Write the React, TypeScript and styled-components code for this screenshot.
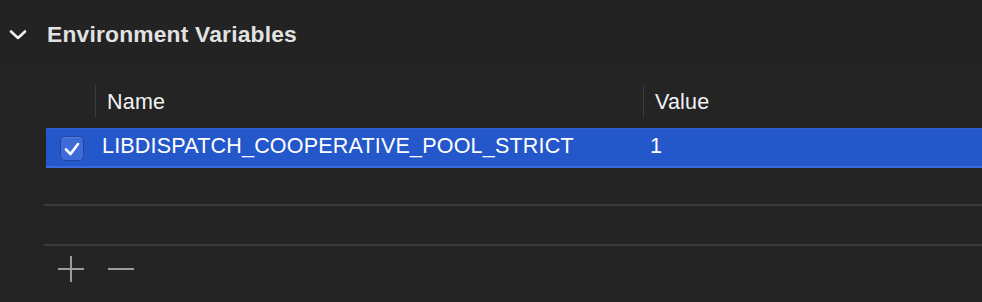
import React, { useState } from "react";
import styled, { createGlobalStyle } from "styled-components";

const GlobalStyle = createGlobalStyle`
  html, body {
    margin: 0;
    padding: 0;
    background: #242424;
  }
  body {
    font-family: "Liberation Sans", Arial, sans-serif;
    -webkit-font-smoothing: antialiased;
  }
`;

type EnvVar = { name: string; value: string; enabled: boolean };

const initialVars: EnvVar[] = [
  { name: "LIBDISPATCH_COOPERATIVE_POOL_STRICT", value: "1", enabled: true },
];

const App: React.FC = () => {
  const [open, setOpen] = useState(true);
  const [vars, setVars] = useState(initialVars);
  const [selected, setSelected] = useState(0);

  const toggle = (i: number) => {
    setVars(vars.map((v, idx) => (idx === i ? { ...v, enabled: !v.enabled } : v)));
  };

  return (
    <Page>
      <GlobalStyle />
      <SectionHeader onClick={() => setOpen(!open)}>
        <Chevron width="18" height="12" viewBox="0 0 18 12" open={open}>
          <polyline
            points="2,2.5 9,9 16,2.5"
            fill="none"
            stroke="#f2f2f2"
            strokeWidth="2.6"
            strokeLinecap="round"
            strokeLinejoin="round"
          />
        </Chevron>
        <Title>Environment Variables</Title>
      </SectionHeader>

      <Table>
        <HeaderRow>
          <CheckCol />
          <HeaderCell>Name</HeaderCell>
          <HeaderCell>Value</HeaderCell>
        </HeaderRow>

        {vars.map((v, i) => (
          <Row key={v.name} selected={selected === i} onClick={() => setSelected(i)}>
            <CheckCol>
              <CheckBox checked={v.enabled} onClick={() => toggle(i)}>
                {v.enabled && (
                  <svg width="18" height="16" viewBox="0 0 18 16">
                    <polyline
                      points="3,8.5 7.5,13 15,3"
                      fill="none"
                      stroke="#ffffff"
                      strokeWidth="2.6"
                      strokeLinecap="round"
                      strokeLinejoin="round"
                    />
                  </svg>
                )}
              </CheckBox>
            </CheckCol>
            <Cell>{v.name}</Cell>
            <Cell>{v.value}</Cell>
          </Row>
        ))}

        <EmptyRow height={36} />
        <Divider />
        <EmptyRow height={38} />
        <Divider />

        <Footer>
          <IconButton aria-label="add">
            <svg width="28" height="28" viewBox="0 0 28 28">
              <path d="M14 1 V27 M1 14 H27" stroke="#9c9c9c" strokeWidth="2" />
            </svg>
          </IconButton>
          <IconButton aria-label="remove">
            <svg width="28" height="28" viewBox="0 0 28 28">
              <path d="M1 14 H27" stroke="#9c9c9c" strokeWidth="2" />
            </svg>
          </IconButton>
        </Footer>
      </Table>
    </Page>
  );
};

const Page = styled.div`
  width: 982px;
  height: 302px;
  background: #242424;
  overflow: hidden;
`;

const SectionHeader = styled.div`
  display: flex;
  align-items: center;
  height: 68px;
  background: #232323;
  cursor: default;
`;

const Chevron = styled.svg<{ open: boolean }>`
  flex-shrink: 0;
  margin-left: 9px;
  margin-top: 1px;
  transform: rotate(${(p) => (p.open ? 0 : -90)}deg);
`;

const Title = styled.div`
  margin-left: 20px;
  font-size: 22.8px;
  font-weight: 700;
  letter-spacing: 0.2px;
  color: #e2e2e2;
`;

const Table = styled.div`
  display: flex;
  flex-direction: column;
  margin-left: 46px;
`;

const HeaderRow = styled.div`
  display: grid;
  grid-template-columns: 49px 548px 1fr;
  align-items: end;
  height: 60px;
  padding-bottom: 10px;
  box-sizing: border-box;
`;

const CheckCol = styled.div`
  display: flex;
  align-items: center;
  padding-left: 14px;
`;

const HeaderCell = styled.div`
  display: flex;
  align-items: center;
  height: 33px;
  padding-left: 11px;
  padding-top: 2px;
  box-sizing: border-box;
  border-left: 1px solid #3c3c3c;
  font-size: 21.5px;
  letter-spacing: 0.2px;
  color: #f2f2f2;
`;

const Row = styled.div<{ selected: boolean }>`
  display: grid;
  grid-template-columns: 49px 548px 1fr;
  align-items: center;
  height: 40px;
  box-sizing: border-box;
  background: ${(p) => (p.selected ? "#2457c9" : "transparent")};
  box-shadow: ${(p) =>
    p.selected ? "inset 0 -2px 0 #3a6bd8, inset 0 1px 0 #2f5fc8" : "none"};
`;

const CheckBox = styled.div<{ checked: boolean }>`
  display: flex;
  flex-shrink: 0;
  align-items: center;
  justify-content: center;
  width: 24px;
  height: 25px;
  margin-top: 1px;
  box-sizing: border-box;
  border-radius: 5px;
  background: ${(p) => (p.checked ? "#3d6cd8" : "#3a3a3a")};
  border: 1px solid #1f48a6;
  box-shadow: inset 0 1px 0 rgba(255, 255, 255, 0.12);
`;

const Cell = styled.div`
  padding-left: 7px;
  padding-bottom: 4px;
  font-size: 21.5px;
  letter-spacing: 0.2px;
  color: #ffffff;
  white-space: nowrap;
`;

const EmptyRow = styled.div<{ height: number }>`
  height: ${(p) => p.height}px;
`;

const Divider = styled.div`
  height: 2px;
  margin-left: -2px;
  background: #3b3b3b;
`;

const Footer = styled.div`
  display: flex;
  align-items: center;
  gap: 22px;
  height: 45px;
  padding-left: 11px;
`;

const IconButton = styled.div`
  display: flex;
  width: 28px;
  height: 28px;
`;

export default App;
